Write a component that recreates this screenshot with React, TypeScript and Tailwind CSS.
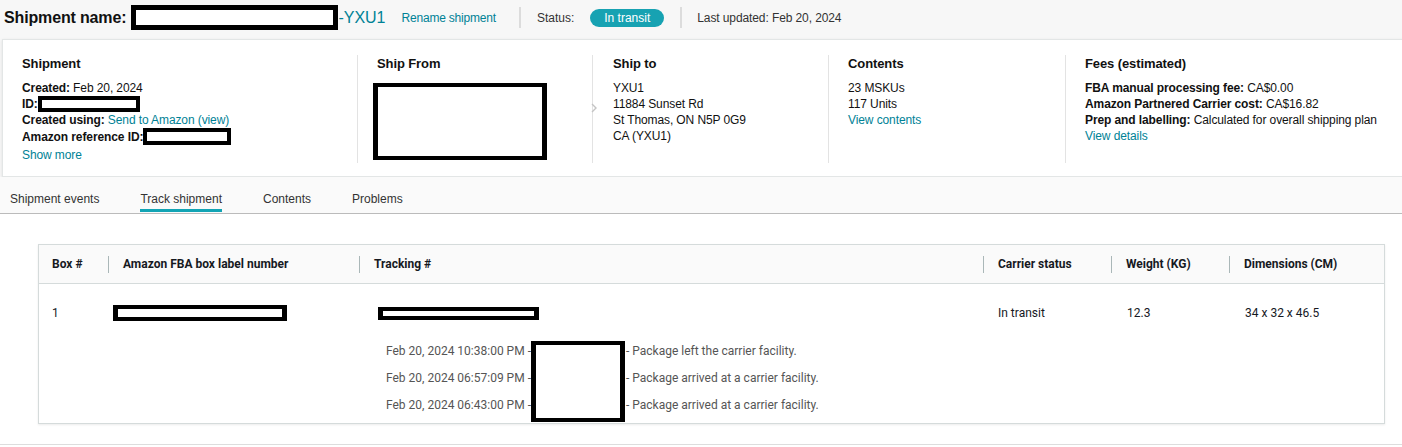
import React from 'react';

const link = 'text-[#008296]';

const Redact = ({ className }: { className: string }) => (
  <span className={`inline-block border-black bg-white ${className}`} />
);

const Chevron = () => (
  <svg className="absolute -left-[3px] top-[47px]" width="8" height="12" viewBox="0 0 8 12" fill="none">
    <path d="M2 2l4 4-4 4" stroke="#c4c4c4" strokeWidth="1.4" />
  </svg>
);

const events = [
  { time: 'Feb 20, 2024 10:38:00 PM -', text: '- Package left the carrier facility.' },
  { time: 'Feb 20, 2024 06:57:09 PM -', text: '- Package arrived at a carrier facility.' },
  { time: 'Feb 20, 2024 06:43:00 PM -', text: '- Package arrived at a carrier facility.' },
];

const headers = ['Amazon FBA box label number', 'Tracking #', 'Carrier status', 'Weight (KG)', 'Dimensions (CM)'];

export default function App() {
  return (
    <div className="w-[1402px] h-[447px] overflow-hidden bg-white font-['Liberation_Sans',Arial,sans-serif] text-[#111]">
      {/* top bar */}
      <div className="bg-[#f7f7f7]">
        <div className="h-[39px] flex items-center pb-[4px] pl-[4px] whitespace-nowrap">
          <span className="text-[16px] font-bold tracking-[-0.15px]">Shipment name:</span>
          <Redact className="ml-[5px] w-[207px] h-[25px] border-[5px]" />
          <span className={`text-[16px] ${link}`}>-YXU1</span>
          <span className={`ml-[16px] text-[12px] tracking-[-0.2px] ${link}`}>Rename shipment</span>
          <span className="ml-[23px] w-[2px] h-[21px] bg-[#dcdcdc]" />
          <span className="ml-[16px] text-[12px] text-[#333]">Status:</span>
          <span className="ml-[16px] h-[18px] w-[74px] rounded-full bg-[#17a2b2] text-white text-[12px] flex items-center justify-center">
            In transit
          </span>
          <span className="ml-[16px] w-[2px] h-[21px] bg-[#dcdcdc]" />
          <span className="ml-[15px] text-[12px] text-[#333] tracking-[-0.1px]">Last updated: Feb 20, 2024</span>
        </div>

        {/* summary card */}
        <div className="ml-[2px] w-[1420px] bg-white border border-[#e3e6e6] shadow-[0_1px_3px_rgba(0,0,0,0.1)] pt-[15px] pb-[13px] flex text-[12px] leading-[16px] tracking-[-0.1px]">
          <div className="w-[354px] pl-[19px] pt-[1px] h-[108px]">
            <div className="text-[13px] font-bold">Shipment</div>
            <div className="mt-[8px]">
              <div><b>Created:</b> Feb 20, 2024</div>
              <div className="flex items-center">
                <b>ID:</b>
                <Redact className="w-[102px] h-[16px] border-[4px]" />
              </div>
              <div>
                <b>Created using:</b> <span className={link}>Send to Amazon (view)</span>
              </div>
              <div className="flex items-center">
                <b>Amazon reference ID:</b>
                <Redact className="w-[88px] h-[17px] border-[4px]" />
              </div>
              <div className={`mt-[2px] ${link}`}>Show more</div>
            </div>
          </div>

          <div className="w-[235px] border-l border-[#e3e3e3] pl-[19px] pt-[1px] h-[108px]">
            <div className="text-[13px] font-bold">Ship From</div>
            <Redact className="block -ml-[4px] mt-[11px] w-[174px] h-[77px] border-[4px] border-x-[5px]" />
          </div>

          <div className="relative w-[236px] border-l border-[#e3e3e3] pl-[20px] pt-[1px] h-[108px]">
            <Chevron />
            <div className="text-[13px] font-bold">Ship to</div>
            <div className="mt-[8px]">
              <div>YXU1</div>
              <div>11884 Sunset Rd</div>
              <div>St Thomas, ON N5P 0G9</div>
              <div>CA (YXU1)</div>
            </div>
          </div>

          <div className="w-[237px] border-l border-[#e3e3e3] pl-[19px] pt-[1px] h-[108px]">
            <div className="text-[13px] font-bold">Contents</div>
            <div className="mt-[8px]">
              <div>23 MSKUs</div>
              <div>117 Units</div>
              <div className={link}>View contents</div>
            </div>
          </div>

          <div className="flex-1 border-l border-[#e3e3e3] pl-[19px] pt-[1px] h-[108px]">
            <div className="text-[13px] font-bold">Fees (estimated)</div>
            <div className="mt-[8px]">
              <div><b>FBA manual processing fee:</b> CA$0.00</div>
              <div><b>Amazon Partnered Carrier cost:</b> CA$16.82</div>
              <div><b>Prep and labelling:</b> Calculated for overall shipping plan</div>
              <div className={link}>View details</div>
            </div>
          </div>
        </div>
      </div>

      {/* tabs */}
      <div className="h-[37px] bg-[#fafafa] border-b border-[#bbb] flex gap-[41px] pl-[10px] text-[12px] text-[#333]">
        {['Shipment events', 'Track shipment', 'Contents', 'Problems'].map((t) => (
          <div key={t} className="flex flex-col justify-end h-full">
            <span className="leading-[14px]">{t}</span>
            <span className={`mt-[3px] mb-[1px] h-[3px] ${t === 'Track shipment' ? 'bg-[#12a4b4]' : 'bg-transparent'}`} />
          </div>
        ))}
      </div>

      {/* tracking table */}
      <div className="mt-[30px] ml-[38px] w-[1347px] border border-[#d5dbdb] shadow-[0_1px_2px_rgba(0,0,0,0.08)] font-['Roboto',sans-serif] text-[12px] text-[#16191f]">
        <div className="h-[39px] bg-[#fafafa] border-b border-[#d5dbdb] grid grid-cols-[69px_251px_624px_128px_118px_1fr] items-center font-bold">
          <div className="pl-[13px]">Box #</div>
          {headers.map((h) => (
            <div key={h} className="flex items-center">
              <span className="w-px h-[17px] bg-[#aab7b8]" />
              <span className="ml-[14px]">{h}</span>
            </div>
          ))}
        </div>

        <div className="pt-[21px] pb-[1px] grid grid-cols-[69px_251px_624px_128px_118px_1fr] leading-[16px]">
          <div className="pl-[13px]">1</div>
          <div className="flex items-center pl-[5px]">
            <Redact className="w-[174px] h-[16px] border-[5px] border-y-[4px]" />
          </div>
          <div className="flex items-center pl-[19px]">
            <Redact className="w-[161px] h-[13px] border-[4px] border-x-[5px]" />
          </div>
          <div className="pl-[15px]">In transit</div>
          <div className="pl-[16px]">12.3</div>
          <div className="pl-[16px]">34 x 32 x 46.5</div>

          <div className="col-start-3 col-span-4 mt-[17px] pl-[27px] flex items-start text-[#555] whitespace-nowrap">
            <div>
              {events.map((e) => (
                <div key={e.time} className="h-[27px] leading-[27px]">{e.time}</div>
              ))}
            </div>
            <Redact className="mt-[3px] w-[94px] h-[81px] border-[5px] border-y-[4px]" />
            <div className="ml-[1px]">
              {events.map((e) => (
                <div key={e.time} className="h-[27px] leading-[27px]">{e.text}</div>
              ))}
            </div>
          </div>
        </div>
      </div>

      <div className="mt-[20px] h-px bg-[#dddddd]" />
    </div>
  );
}
